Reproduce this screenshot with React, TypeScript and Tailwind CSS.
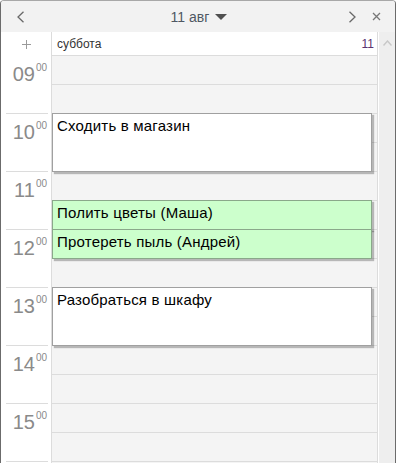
import React from "react";

const hours = ["09", "10", "11", "12", "13", "14", "15"];

type Ev = { top: number; height: number; title: string; green?: boolean };
const events: Ev[] = [
  { top: 57, height: 59, title: "Сходить в магазин" },
  { top: 144, height: 30, title: "Полить цветы (Маша)", green: true },
  { top: 173, height: 30, title: "Протереть пыль (Андрей)", green: true },
  { top: 231, height: 59, title: "Разобраться в шкафу" },
];

export default function App() {
  return (
    <div
      className="w-[396px] h-[463px] overflow-hidden flex flex-col border-x border-t border-x-[#6b6b6b] border-t-[#a8a8a8] rounded-t-[4px] bg-white"
      style={{ fontFamily: '"Liberation Sans", Arial, sans-serif' }}
    >
      {/* window header */}
      <div className="h-[31px] shrink-0 bg-[#f2f2f2] flex items-center relative">
        <svg className="absolute left-[15px] top-[10px]" width="9" height="12" viewBox="0 0 9 12">
          <path d="M7.5 0.8 L2 6 L7.5 11.2" fill="none" stroke="#6a6a6a" strokeWidth="1.3" />
        </svg>
        <div className="flex-1 flex items-center justify-center gap-[6px] pl-[2px]">
          <span className="text-[14px] text-[#4f5863] leading-none">11 авг</span>
          <svg width="12" height="6" viewBox="0 0 12 6">
            <path d="M0 0 L12 0 L6 6 Z" fill="#505050" />
          </svg>
        </div>
        <svg className="absolute left-[347px] top-[10px]" width="9" height="12" viewBox="0 0 9 12">
          <path d="M1.5 0.8 L7 6 L1.5 11.2" fill="none" stroke="#6a6a6a" strokeWidth="1.3" />
        </svg>
        <svg className="absolute left-[371px] top-[11px]" width="9" height="9" viewBox="0 0 9 9">
          <path d="M1 1 L8 8 M8 1 L1 8" fill="none" stroke="#777" strokeWidth="1.3" />
        </svg>
      </div>

      {/* body */}
      <div className="flex flex-1 min-h-0">
        {/* time column */}
        <div className="w-[50px] shrink-0 flex flex-col bg-white">
          <div className="h-[24px] shrink-0 flex items-center justify-center pl-[1px]">
            <svg width="9" height="9" viewBox="0 0 9 9">
              <path d="M4.5 0 V9 M0 4.5 H9" stroke="#9a9a9a" strokeWidth="1" />
            </svg>
          </div>
          {hours.map((h) => (
            <div key={h} className="h-[58px] shrink-0 ml-[5px] mr-[3px] border-b border-[#dcdcdc] flex justify-end items-start pr-[1px] text-[#8a8a8a]">
              <span className="text-[20px] leading-[20px] pt-[8px]">{h}</span>
              <span className="text-[10px] leading-[10px] pt-[7px] ml-[1px]">00</span>
            </div>
          ))}
        </div>

        {/* day column */}
        <div className="w-[327px] shrink-0 border-x border-[#dcdcdc] bg-[#f4f4f4] flex flex-col">
          <div className="h-[24px] shrink-0 bg-white border-b border-[#dcdcdc] flex items-center justify-between pl-[5px] pr-[3px] text-[12px]">
            <span className="text-[#333]">суббота</span>
            <span className="text-[#5a3470]">11</span>
          </div>
          <div className="relative flex-1">
            {Array.from({ length: 14 }).map((_, i) => (
              <div key={i} className="h-[29px] border-b border-[#dcdcdc]" />
            ))}
            {events.map((e) => (
              <div
                key={e.title}
                className={
                  "absolute left-0 w-[320px] border px-[4px] pt-[2px] text-[15px] leading-[20px] tracking-[0.2px] text-black shadow-[2px_2px_1px_rgba(0,0,0,0.25)] " +
                  (e.green ? "bg-[#ccffcc] border-[#8aa88a]" : "bg-white border-[#a0a0a0]")
                }
                style={{ top: e.top, height: e.height }}
              >
                {e.title}
              </div>
            ))}
          </div>
        </div>

        {/* scrollbar */}
        <div className="w-[16px] shrink-0 ml-[1px] bg-[#eeeeee] flex justify-center pt-[8px]">
          <svg width="9" height="6" viewBox="0 0 9 6">
            <path d="M0.5 5.5 L4.5 1 L8.5 5.5" fill="none" stroke="#c8c8c8" strokeWidth="1.4" />
          </svg>
        </div>
      </div>
    </div>
  );
}
